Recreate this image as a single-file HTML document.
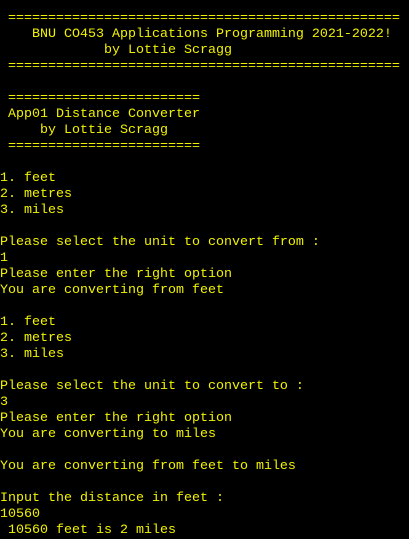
<!DOCTYPE html>
<html><head><style>
html,body{margin:0;padding:0;background:#000;width:409px;height:537px;overflow:hidden}
pre{margin:0;position:absolute;top:11px;left:0;font-family:"Liberation Mono",monospace;font-size:13.33px;line-height:16px;color:#f2f200;white-space:pre}
</style></head><body><pre> =================================================
    BNU CO453 Applications Programming 2021-2022!
             by Lottie Scragg
 =================================================

 ========================
 App01 Distance Converter
     by Lottie Scragg
 ========================

1. feet
2. metres
3. miles

Please select the unit to convert from :
1
Please enter the right option
You are converting from feet

1. feet
2. metres
3. miles

Please select the unit to convert to :
3
Please enter the right option
You are converting to miles

You are converting from feet to miles

Input the distance in feet :
10560
 10560 feet is 2 miles</pre></body></html>
